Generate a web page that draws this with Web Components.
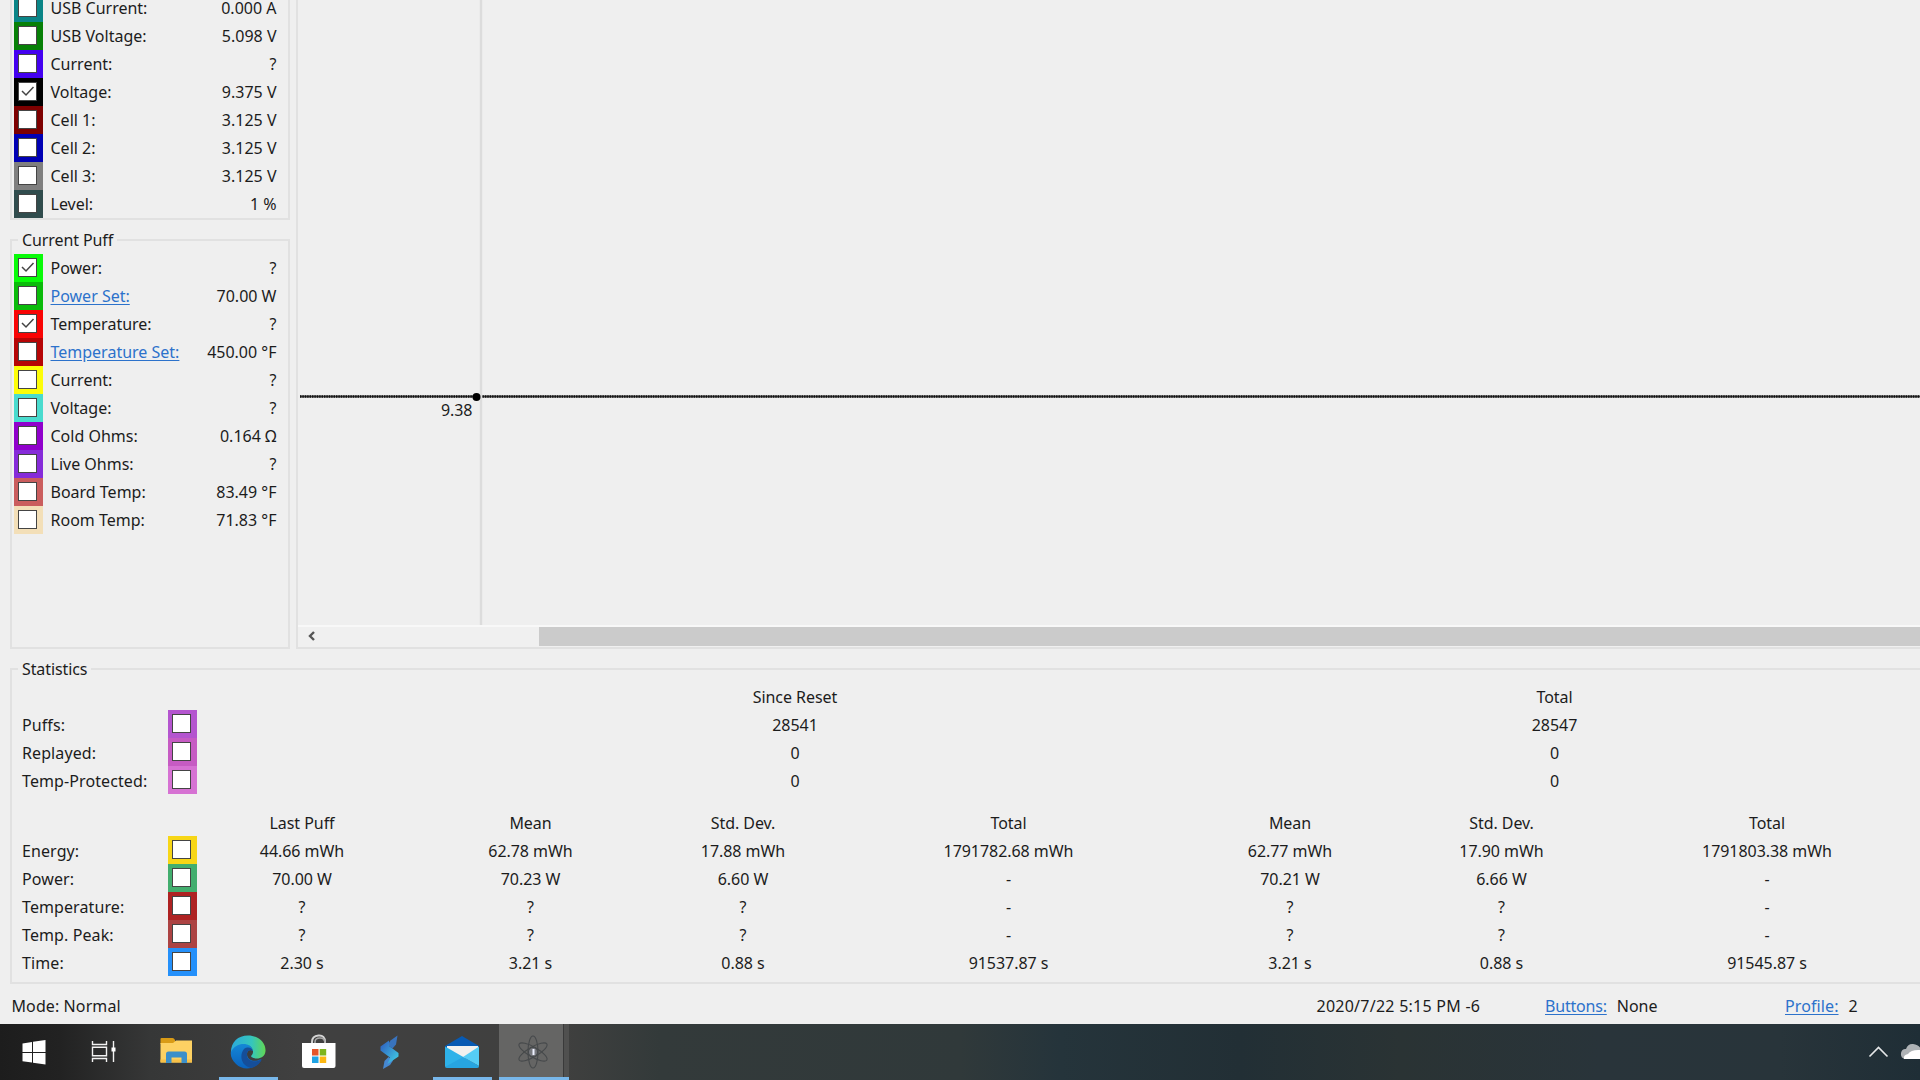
<!DOCTYPE html>
<html lang="en">
<head>
<meta charset="utf-8">
<title>Device Monitor</title>
<style>
    html, body {
        margin: 0;
        height: 100%;
        overflow: hidden;
        background: #efefef;
    }
    body {
        font: 16px/28px "Noto Sans", "Open Sans", sans-serif;
        color: #1c1c1c;
    }
</style>
</head>
<body>
<device-monitor></device-monitor>

<script>
class ColorCheck extends HTMLElement {
    constructor(){
        super();
        this.attachShadow({mode:'open'});
    }

    connectedCallback() {
        const tick = this.hasAttribute('checked') ? '<path d="M3 8l4 4 7.5-8"/>' : '';
        this.shadowRoot.innerHTML = `
            <style>
                :host{
                    display: flex;
                    width: 28.5px;
                    height: 28px;
                    padding: 4px 0 0 4px;
                    box-sizing: border-box;
                    background: ${this.getAttribute('color')};
                }
                svg{
                    width: 19px;
                    height: 19px;
                    box-sizing: border-box;
                    border: 1px solid #444;
                    background: #fff;
                    fill: none;
                    stroke: #444;
                    stroke-width: 1.5;
                }
            </style>
            <svg viewBox="0 0 17 17">${tick}</svg>
        `;
    }
}

class GroupBox extends HTMLElement {
    constructor(){
        super();
        this.attachShadow({mode:'open'});
    }

    connectedCallback() {
        this.shadowRoot.innerHTML = `
            <style>
                :host{
                    display: block;
                    box-sizing: border-box;
                }
                fieldset{
                    margin: 0;
                    padding: 0;
                    min-width: 0;
                    height: 100%;
                    box-sizing: border-box;
                    border: 2px solid #e1e1e1;
                }
                legend{
                    margin-left: 6px;
                    padding: 0 4px;
                    height: 28px;
                    letter-spacing: -.1px;
                }
            </style>
            <fieldset>
                <legend>${this.getAttribute('label')}</legend>
                <slot></slot>
            </fieldset>
        `;
    }
}

class ReadoutRow extends HTMLElement {
    constructor(){
        super();
        this.attachShadow({mode:'open'});
    }

    connectedCallback() {
        const checked = this.hasAttribute('checked') ? 'checked' : '';
        const link = this.hasAttribute('link') ? 'link' : '';
        this.shadowRoot.innerHTML = `
            <style>
                :host{
                    display: flex;
                    height: 28px;
                    padding: 0 11.5px 0 2px;
                }
                .label{
                    margin-left: 8px;
                    flex: 1;
                }
                .link{
                    color: #2c72cb;
                    text-decoration: underline;
                    text-underline-offset: 2px;
                }
            </style>
            <color-check color="${this.getAttribute('color')}" ${checked}></color-check>
            <div class="label"><span class="${link}">${this.getAttribute('label')}</span></div>
            <div><slot></slot></div>
        `;
    }
}

class PuffChart extends HTMLElement {
    constructor(){
        super();
        this.attachShadow({mode:'open'});
    }

    connectedCallback() {
        this.shadowRoot.innerHTML = `
            <style>
                :host{
                    display: flex;
                    flex-direction: column;
                    box-sizing: border-box;
                    border-left: 2px solid #e1e1e1;
                    border-bottom: 2px solid #e1e1e1;
                }
                .plot{
                    display: block;
                    height: 625px;
                }
                .bar{
                    display: flex;
                    height: 19px;
                    padding: 2px 0 1px;
                    background: #f0f0f0;
                    box-shadow: inset 0 2px #f8f8f8;
                }
                .arrow{
                    width: 241px;
                    height: 19px;
                }
                .thumb{
                    flex: 1;
                    background: #cbcbcb;
                }
            </style>
            <svg class="plot" width="1622" height="625" viewBox="298 0 1622 625">
                <path d="M481 0V625" stroke="#dcdcdc" stroke-width="2.4"/>
                <path d="M300 396.5H476M482.5 396.5H1920" stroke="#444" stroke-width="2.2"/>
                <path d="M300 396.5H476M482.5 396.5H1920" stroke="#111" stroke-width="2.6" stroke-dasharray="1.4 1"/>
                <circle cx="476.5" cy="397" r="4" fill="#000"/>
                <text x="441" y="415.5" fill="#1c1c1c" letter-spacing="-.15">9.38</text>
            </svg>
            <div class="bar">
                <svg class="arrow" viewBox="0 0 241 19" fill="none" stroke="#555" stroke-width="2.4">
                    <path d="M16 5l-4 4 4 4"/>
                </svg>
                <div class="thumb"></div>
            </div>
        `;
    }
}

class StatsTable extends HTMLElement {
    constructor(){
        super();
        this.attachShadow({mode:'open'});
    }

    counts(){
        const rows = [
            ['Puffs:', '#b455cf', '28541', '28547'],
            ['Replayed:', '#c65bc3', '0', '0'],
            ['Temp-Protected:', '#d672d3', '0', '0']
        ];
        return rows.map(([label, color, reset, total]) => `
            <div class="name">${label}</div>
            <color-check color="${color}"></color-check>
            <div></div>
            <div class="wide">${reset}</div>
            <div class="wide">${total}</div>
        `).join('');
    }

    values(){
        const rows = [
            ['Energy:', '#f7d616', '44.66 mWh', '62.78 mWh', '17.88 mWh', '1791782.68 mWh', '62.77 mWh', '17.90 mWh', '1791803.38 mWh'],
            ['Power:', '#42ae6e', '70.00 W', '70.23 W', '6.60 W', '-', '70.21 W', '6.66 W', '-'],
            ['Temperature:', '#ae2222', '?', '?', '?', '-', '?', '?', '-'],
            ['Temp. Peak:', '#ac4343', '?', '?', '?', '-', '?', '?', '-'],
            ['Time:', '#2490fa', '2.30 s', '3.21 s', '0.88 s', '91537.87 s', '3.21 s', '0.88 s', '91545.87 s']
        ];
        return rows.map(([label, color, ...cells]) => `
            <div class="name">${label}</div>
            <color-check color="${color}"></color-check>
            ${cells.map(cell => `<div>${cell}</div>`).join('')}
        `).join('');
    }

    connectedCallback() {
        const heads = ['Last Puff', 'Mean', 'Std. Dev.', 'Total', 'Mean', 'Std. Dev.', 'Total'];
        this.shadowRoot.innerHTML = `
            <style>
                :host{
                    display: block;
                    margin-top: -1px;
                }
                .grid{
                    display: grid;
                    grid-template-columns: 156px 29px 210px 247px 178px 353px 210px 213px 318px;
                    grid-auto-rows: 28px;
                    line-height: 30px;
                    text-align: center;
                    letter-spacing: -.05px;
                }
                .grid + .grid{
                    margin-top: 14px;
                }
                .name{
                    padding-left: 10px;
                    text-align: left;
                    letter-spacing: .1px;
                }
                .wide{
                    grid-column: span 3;
                    padding-right: 2px;
                }
            </style>
            <div class="grid">
                <div></div><div></div><div></div>
                <div class="wide">Since Reset</div>
                <div class="wide">Total</div>
                ${this.counts()}
            </div>
            <div class="grid">
                <div></div><div></div>
                ${heads.map(head => `<div>${head}</div>`).join('')}
                ${this.values()}
            </div>
        `;
    }
}

class StatusBar extends HTMLElement {
    constructor(){
        super();
        this.attachShadow({mode:'open'});
    }

    connectedCallback() {
        this.shadowRoot.innerHTML = `
            <style>
                :host{
                    display: grid;
                    grid-template-columns: 1305px 228.5px 240px 1fr;
                    height: 32px;
                    padding: 8px 0 0 11.5px;
                    white-space: nowrap;
                }
                .mode{
                    letter-spacing: .1px;
                }
                .date{
                    letter-spacing: .25px;
                }
                a{
                    margin-right: 10px;
                    color: #2c72cb;
                    text-decoration: underline;
                    text-underline-offset: 2px;
                    letter-spacing: -.2px;
                }
                .profile{
                    letter-spacing: .1px;
                }
            </style>
            <div class="mode">Mode: Normal</div>
            <div class="date">2020/7/22 5:15 PM -6</div>
            <div><a>Buttons:</a><span>None</span></div>
            <div><a class="profile">Profile:</a><span>2</span></div>
        `;
    }
}

class TaskButton extends HTMLElement {
    constructor(){
        super();
        this.attachShadow({mode:'open'});
    }

    connectedCallback() {
        this.shadowRoot.innerHTML = `
            <style>
                :host{
                    display: flex;
                    justify-content: center;
                    box-sizing: border-box;
                    height: 56px;
                    padding-top: 9px;
                }
                :host([open]){
                    border-bottom: 3px solid #78b7ea;
                }
                :host([active]){
                    background: linear-gradient(90deg, #656564 64px, #3a3a3a 64px, #3a3a3a 65px, #50504f 65px);
                }
            </style>
            <slot></slot>
        `;
    }
}

class TaskBar extends HTMLElement {
    constructor(){
        super();
        this.attachShadow({mode:'open'});
    }

    connectedCallback() {
        this.shadowRoot.innerHTML = `
            <style>
                :host{
                    display: flex;
                    height: 56px;
                    background: linear-gradient(90deg, #1d1d1d 0, #222 60px, #363737 150px, #404040 300px, #40403f 560px, #333a3a 660px, #30393a 960px, #25343b 1060px, #222f35 1240px, #2a3334 1400px, #29343a 1600px, #28343a 1780px, #1f2e36 1920px);
                }
                svg{
                    display: block;
                    width: 40px;
                    height: 40px;
                }
                .start{ width: 69px; }
                .start svg{ margin-right: 1px; }
                .view{ width: 69px; }
                .files{ width: 77px; margin-right: 4px; }
                .files svg{ margin-right: 1px; }
                .edge{ width: 59px; }
                .edge svg{ margin-right: 1px; }
                .store{ width: 80px; }
                .store svg{ margin-left: 1px; }
                .stack{ width: 65px; }
                .stack svg{ margin-right: 3px; }
                .mail{ width: 59px; margin: 0 7px 0 10px; }
                .mail svg{ margin-right: 2px; }
                .atom{ width: 70px; }
                .atom svg{ margin-right: 2px; }
                .tray{ display: flex; margin-left: auto; padding-top: 9px; }
            </style>
            <task-button class="start"><svg viewBox="0 0 40 40">
                <path fill="#fff" d="M8.500 10.500l9.500-1.500V19H8.500zM19 8.800L31.500 7V19H19zM8.500 20H18v9.600L8.500 28.300zM19 20h12.500v11.500L19 29.700z"/>
            </svg></task-button>
            <task-button class="view"><svg viewBox="0 0 40 40" fill="none" stroke="#f2f2f2" stroke-width="1.400">
                <path d="M8.500 8v3.500h14V8M8.500 29v-3.500h14V29M29.500 8v21"/>
                <path d="M8.500 14.300h14v8.500h-14z"/>
                <path fill="#fff" stroke="none" d="M27.500 14.500h4v4h-4z"/>
            </svg></task-button>
            <task-button class="files"><svg viewBox="0 0 40 40">
                <path fill="#d99b16" d="M4.500 6q0-1 1-1h11q1.500 0 2.500 2v4H4.500z"/>
                <path fill="#fdd163" d="M4.500 10h12.500l3-2.500h16V29.500h-31.500z"/>
                <path fill="#f7c048" d="M4.500 26.500h31.500v3H4.500z"/>
                <path fill="#3b8fca" d="M10 30V21q0-2.500 2.500-2.500h16q2.500 0 2.500 2.500v9h-5.500v-5.500h-10V30z"/>
            </svg></task-button>
            <task-button class="edge" open><svg viewBox="0 0 40 40">
                <defs>
                    <linearGradient id="sea" x1="0" x2="1"><stop offset="0" stop-color="#2ba9dc"/><stop offset=".6" stop-color="#35c5bd"/><stop offset="1" stop-color="#61d754"/></linearGradient>
                    <linearGradient id="deep" x2="0" y2="1"><stop offset="0" stop-color="#1588d7"/><stop offset="1" stop-color="#0a62bd"/></linearGradient>
                </defs>
                <path fill="url(#deep)" d="M3 18C6 7 24 8 25 18c-2-2-6-1-6 3 0 6 7 9 14 5-5 11-18 12-25 5-4-4-6-8-5-13z"/>
                <path fill="#154e99" d="M16 16c-5 6-3 17 7 19 5-1 9-4 11-9-8 5-16 1-15-5 0-3 3-5 6-3-1-3-5-5-9-2z"/>
                <path fill="url(#sea)" d="M3 19C3 9 10 2.500 20 2.500c11 0 18 8 17.500 15.500-.5 8-10 9-14 6-1.500-1.300 2-2 1.500-6C24 9 8 8 3 19z"/>
            </svg></task-button>
            <task-button class="store"><svg viewBox="0 0 40 40">
                <path fill="none" stroke="#d4d4d4" stroke-width="2" d="M13 12V9q0-6 6.500-6.500T26 9v3"/>
                <path fill="none" stroke="#a9a9a9" stroke-width="1.500" d="M16 12V9q0-4 5-4t5 5v2"/>
                <path fill="#fff" d="M3 10h33.500v23Q36.500 35 34.500 35H5q-2 0-2-2z"/>
                <path fill="#e55529" d="M13 16h6.500v6.500H13z"/>
                <path fill="#7eb51e" d="M20.700 16h6.500v6.500h-6.500z"/>
                <path fill="#20a3e4" d="M13 23.500h6.500V30H13z"/>
                <path fill="#fdb813" d="M20.700 23.500h6.500V30h-6.500z"/>
            </svg></task-button>
            <task-button class="stack"><svg viewBox="0 0 40 40">
                <defs><linearGradient id="bolt" x2="1" y2="1"><stop offset="0" stop-color="#2e59bd"/><stop offset="1" stop-color="#42d4e8"/></linearGradient></defs>
                <path fill="#3973bd" d="M28.500 2.500l-1.500 9-3.500 4-5-3.500 3-4.500z"/>
                <path fill="#4688d1" d="M14 36l1.500-8 4-4 4.500 3.500-3 4.500z"/>
                <path fill="url(#bolt)" d="M20 7.500l-8.500 6v4l9.500 7-2.500 6.500 11-7.500v-3.500L20 13z"/>
            </svg></task-button>
            <task-button class="mail" open><svg viewBox="0 0 40 40">
                <path fill="#075ab3" d="M3 13L20 3l17 10v5H3z"/>
                <path fill="#f1f1ef" d="M5 13h31v8L21 26 5 18z"/>
                <path fill="#2eb2e9" d="M3 13.500l34 19.500q0 2-2 2H5q-2 0-2-2z"/>
                <path fill="#55cdf6" d="M37 13.500L21 24l16 9z"/>
                <path fill="#1d91d4" d="M21 24l-18 10q1 1 2 1h30q2 0 2-2z" opacity=".4"/>
            </svg></task-button>
            <task-button class="atom" open active><svg viewBox="0 0 40 40" fill="none" stroke="#46494b" stroke-width="1.100">
                <ellipse cx="20" cy="19" rx="5" ry="16"/>
                <ellipse cx="20" cy="19" rx="5" ry="16" transform="rotate(60 20 19)"/>
                <ellipse cx="20" cy="19" rx="5" ry="16" transform="rotate(-60 20 19)"/>
                <circle cx="20" cy="19" r="4.500" fill="#77797e"/>
                <path stroke="#eef1ff" stroke-width="2" d="M20.500 16v6"/>
            </svg></task-button>
            <div class="tray">
                <svg viewBox="0 0 40 40" fill="none" stroke="#e6e8e9" stroke-width="1.600"><path d="M10.500 23.500l9-9 9 9"/></svg>
                <svg style="width:21px" viewBox="0 0 21 40">
                    <path fill="#aeb2b5" d="M7 26Q1 25.500 2 20 3 15.500 7 16 9 10.500 14 11 19 11.500 21 14.500v11.500z"/>
                    <path fill="#fff" d="M5 26q-1-4 4-5Q12 16.500 21 17v9z"/>
                </svg>
            </div>
        `;
    }
}

class DeviceMonitor extends HTMLElement {
    constructor(){
        super();
        this.attachShadow({mode:'open'});
    }

    connectedCallback() {
        this.shadowRoot.innerHTML = `
            <style>
                :host{
                    display: flex;
                    flex-direction: column;
                    height: 1080px;
                    overflow: hidden;
                }
                .top{
                    display: flex;
                    height: 649px;
                }
                .side{
                    width: 280px;
                    margin: 0 6px 0 10px;
                }
                .battery{
                    display: flow-root;
                    height: 220px;
                    box-sizing: border-box;
                    border: 2px solid #e1e1e1;
                    border-top: 0;
                }
                /* first row starts just above the top of the screen */
                .battery readout-row:first-child{
                    margin-top: -6px;
                }
                .puff{
                    height: 423px;
                    margin-top: 6px;
                }
                puff-chart{
                    flex: 1;
                }
                .stats{
                    height: 329px;
                    margin: 6px -10px 0 10px;
                }
                status-bar{
                    flex: none;
                }
            </style>
            <div class="top">
                <div class="side">
                    <div class="battery">
                        <readout-row color="#0a8587" label="USB Current:">0.000 A</readout-row>
                        <readout-row color="#078007" label="USB Voltage:">5.098 V</readout-row>
                        <readout-row color="#4300f0" label="Current:">?</readout-row>
                        <readout-row color="#000" label="Voltage:" checked>9.375 V</readout-row>
                        <readout-row color="#7d0000" label="Cell 1:">3.125 V</readout-row>
                        <readout-row color="#0000b4" label="Cell 2:">3.125 V</readout-row>
                        <readout-row color="#7f7f7f" label="Cell 3:">3.125 V</readout-row>
                        <readout-row color="#304c4d" label="Level:">1 %</readout-row>
                    </div>
                    <group-box class="puff" label="Current Puff">
                        <readout-row color="#08fb08" label="Power:" checked>?</readout-row>
                        <readout-row color="#0abb0a" label="Power Set:" link>70.00 W</readout-row>
                        <readout-row color="#f90404" label="Temperature:" checked>?</readout-row>
                        <readout-row color="#b60505" label="Temperature Set:" link>450.00 °F</readout-row>
                        <readout-row color="#fdfd08" label="Current:">?</readout-row>
                        <readout-row color="#49dbce" label="Voltage:">?</readout-row>
                        <readout-row color="#9000cc" label="Cold Ohms:">0.164 Ω</readout-row>
                        <readout-row color="#862bd9" label="Live Ohms:">?</readout-row>
                        <readout-row color="#ca5d5d" label="Board Temp:">83.49 °F</readout-row>
                        <readout-row color="#f3dfb8" label="Room Temp:">71.83 °F</readout-row>
                    </group-box>
                </div>
                <puff-chart></puff-chart>
            </div>
            <group-box class="stats" label="Statistics">
                <stats-table></stats-table>
            </group-box>
            <status-bar></status-bar>
            <task-bar></task-bar>
        `;
    }
}

customElements.define('color-check', ColorCheck);
customElements.define('group-box', GroupBox);
customElements.define('readout-row', ReadoutRow);
customElements.define('puff-chart', PuffChart);
customElements.define('stats-table', StatsTable);
customElements.define('status-bar', StatusBar);
customElements.define('task-button', TaskButton);
customElements.define('task-bar', TaskBar);
customElements.define('device-monitor', DeviceMonitor);
</script>
</body>
</html>
